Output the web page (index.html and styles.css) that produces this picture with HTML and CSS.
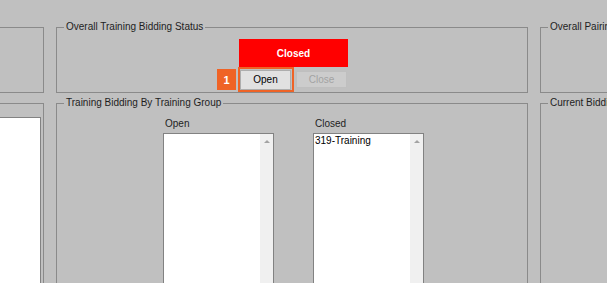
FILE: index.html
```html
<!DOCTYPE html>
<html lang="en">
<head>
  <meta charset="UTF-8">
  <title>Bidding Control</title>
  <link rel="stylesheet" href="styles.css">
</head>
<body>
  <div class="board">
    <!-- top row -->
    <div class="group"></div>

    <div class="group">
      <div class="group-title">Overall Training Bidding Status</div>
      <div class="status">
        <div class="status-flag">Closed</div>
        <div class="status-actions">
          <span class="step-badge">1</span>
          <span class="highlight">
            <button class="btn">Open</button>
          </span>
          <button class="btn btn-disabled" disabled>Close</button>
        </div>
      </div>
    </div>

    <div class="group">
      <div class="group-title">Overall Pairing Status</div>
    </div>

    <!-- second row -->
    <div class="group group-list">
      <div class="listbox listbox-plain"></div>
    </div>

    <div class="group">
      <div class="group-title">Training Bidding By Training Group</div>
      <div class="columns">
        <div class="column">
          <div class="column-label">Open</div>
          <div class="listbox">
            <div class="listbox-items"></div>
            <div class="scrollbar"><span class="scroll-up"></span></div>
          </div>
        </div>
        <div class="column">
          <div class="column-label">Closed</div>
          <div class="listbox">
            <div class="listbox-items">
              <div class="listbox-item">319-Training</div>
            </div>
            <div class="scrollbar"><span class="scroll-up"></span></div>
          </div>
        </div>
      </div>
    </div>

    <div class="group">
      <div class="group-title">Current Bidding Round</div>
    </div>
  </div>
</body>
</html>
```

FILE: styles.css
```css
* {
  margin: 0;
  padding: 0;
  box-sizing: border-box;
}

body {
  background: #c0c0c0;
  font-family: 'Liberation Sans', Arial, sans-serif;
  font-size: 10px;
  color: #1e1e1e;
  overflow: hidden;
  height: 283px;
}

.board {
  display: grid;
  grid-template-columns: 144px 472px 200px;
  grid-template-rows: 66px 260px;
  column-gap: 12px;
  row-gap: 10px;
  margin-left: -100px;
  padding-top: 27px;
}

.group {
  border: 1px solid #8a8a8a;
}

.group-title {
  width: max-content;
  margin: -7px 0 0 7px;
  padding: 0 2px;
  line-height: 12px;
  background: #c0c0c0;
}

/* status block */
.status {
  width: max-content;
  margin: 6px 0 0 160px;
}

.status-flag {
  width: 109px;
  height: 28px;
  margin-left: 22px;
  background: #ff0000;
  color: #fff;
  font-weight: bold;
  display: flex;
  align-items: center;
  justify-content: center;
}

.status-actions {
  display: flex;
  align-items: center;
}

.step-badge {
  width: 19px;
  height: 21px;
  margin-right: 2px;
  background: #ef6326;
  color: #fff;
  font-weight: bold;
  font-size: 11px;
  display: flex;
  align-items: center;
  justify-content: center;
}

.highlight {
  display: flex;
  width: 56px;
  height: 25px;
  border: 2px solid #ef6326;
}

.btn {
  font-family: inherit;
  font-size: 10px;
  width: 51px;
  height: 20px;
  margin: auto 0 auto 0;
  background: #e1e1e1;
  border: 1px solid #adadad;
  color: #000;
}

.btn-disabled {
  height: 17px;
  margin-left: 2px;
  background: #cccccc;
  border-color: #bfbfbf;
  color: #a3a3a3;
}

/* lists */
.group-list {
  padding-top: 13px;
}

.listbox {
  display: flex;
  height: 200px;
  background: #fff;
  border: 1px solid #828282;
}

.listbox-plain {
  width: 140px;
}

.columns {
  display: flex;
  gap: 39px;
  margin: 9px 0 0 106px;
}

.column {
  width: 111px;
}

.column-label {
  line-height: 12px;
  padding-left: 2px;
  margin-bottom: 3px;
}

.listbox-items {
  flex: 1;
}

.listbox-item {
  line-height: 13px;
  padding-left: 1px;
  color: #000;
}

.scrollbar {
  width: 13px;
  background: #f0f0f0;
  display: flex;
  justify-content: center;
}

.scroll-up {
  width: 0;
  height: 0;
  margin-top: 6px;
  border-left: 3px solid transparent;
  border-right: 3px solid transparent;
  border-bottom: 3px solid #a3a3a3;
}
```
